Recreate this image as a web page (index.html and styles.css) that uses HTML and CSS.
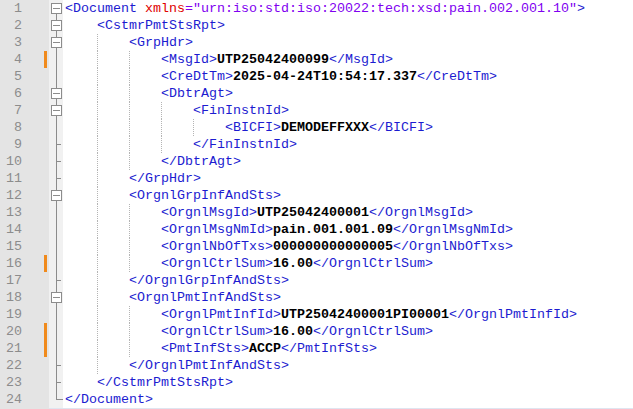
FILE: index.html
```html
<!DOCTYPE html>
<html>
<head>
<meta charset="utf-8">
<link rel="stylesheet" href="styles.css">
</head>
<body>
<div class="editor">
  <div class="ln"><span class="no">1</span><span class="mk"></span><span class="fd first"></span><span class="code"><span class="t">&lt;Document </span><span class="a">xmlns</span><span class="v">="urn:iso:std:iso:20022:tech:xsd:pain.002.001.10"</span><span class="t">&gt;</span></span></div>
  <div class="ln"><span class="no">2</span><span class="mk"></span><span class="fd open"></span><span class="code"><span class="ig"></span><span class="t">&lt;CstmrPmtStsRpt&gt;</span></span></div>
  <div class="ln"><span class="no">3</span><span class="mk"></span><span class="fd open"></span><span class="code"><span class="ig"></span><span class="ig g"></span><span class="t">&lt;GrpHdr&gt;</span></span></div>
  <div class="ln"><span class="no">4</span><span class="mk on"></span><span class="fd mid"></span><span class="code"><span class="ig"></span><span class="ig g"></span><span class="ig g"></span><span class="t">&lt;MsgId&gt;</span><b>UTP25042400099</b><span class="t">&lt;/MsgId&gt;</span></span></div>
  <div class="ln"><span class="no">5</span><span class="mk"></span><span class="fd mid"></span><span class="code"><span class="ig"></span><span class="ig g"></span><span class="ig g"></span><span class="t">&lt;CreDtTm&gt;</span><b>2025-04-24T10:54:17.337</b><span class="t">&lt;/CreDtTm&gt;</span></span></div>
  <div class="ln"><span class="no">6</span><span class="mk"></span><span class="fd open"></span><span class="code"><span class="ig"></span><span class="ig g"></span><span class="ig g"></span><span class="t">&lt;DbtrAgt&gt;</span></span></div>
  <div class="ln"><span class="no">7</span><span class="mk"></span><span class="fd open"></span><span class="code"><span class="ig"></span><span class="ig g"></span><span class="ig g"></span><span class="ig g"></span><span class="t">&lt;FinInstnId&gt;</span></span></div>
  <div class="ln"><span class="no">8</span><span class="mk"></span><span class="fd mid"></span><span class="code"><span class="ig"></span><span class="ig g"></span><span class="ig g"></span><span class="ig g"></span><span class="ig g"></span><span class="t">&lt;BICFI&gt;</span><b>DEMODEFFXXX</b><span class="t">&lt;/BICFI&gt;</span></span></div>
  <div class="ln"><span class="no">9</span><span class="mk"></span><span class="fd tail"></span><span class="code"><span class="ig"></span><span class="ig g"></span><span class="ig g"></span><span class="ig g"></span><span class="t">&lt;/FinInstnId&gt;</span></span></div>
  <div class="ln"><span class="no">10</span><span class="mk"></span><span class="fd tail"></span><span class="code"><span class="ig"></span><span class="ig g"></span><span class="ig g"></span><span class="t">&lt;/DbtrAgt&gt;</span></span></div>
  <div class="ln"><span class="no">11</span><span class="mk"></span><span class="fd tail"></span><span class="code"><span class="ig"></span><span class="ig g"></span><span class="t">&lt;/GrpHdr&gt;</span></span></div>
  <div class="ln"><span class="no">12</span><span class="mk"></span><span class="fd open"></span><span class="code"><span class="ig"></span><span class="ig g"></span><span class="t">&lt;OrgnlGrpInfAndSts&gt;</span></span></div>
  <div class="ln"><span class="no">13</span><span class="mk"></span><span class="fd mid"></span><span class="code"><span class="ig"></span><span class="ig g"></span><span class="ig g"></span><span class="t">&lt;OrgnlMsgId&gt;</span><b>UTP25042400001</b><span class="t">&lt;/OrgnlMsgId&gt;</span></span></div>
  <div class="ln"><span class="no">14</span><span class="mk"></span><span class="fd mid"></span><span class="code"><span class="ig"></span><span class="ig g"></span><span class="ig g"></span><span class="t">&lt;OrgnlMsgNmId&gt;</span><b>pain.001.001.09</b><span class="t">&lt;/OrgnlMsgNmId&gt;</span></span></div>
  <div class="ln"><span class="no">15</span><span class="mk"></span><span class="fd mid"></span><span class="code"><span class="ig"></span><span class="ig g"></span><span class="ig g"></span><span class="t">&lt;OrgnlNbOfTxs&gt;</span><b>000000000000005</b><span class="t">&lt;/OrgnlNbOfTxs&gt;</span></span></div>
  <div class="ln"><span class="no">16</span><span class="mk on"></span><span class="fd mid"></span><span class="code"><span class="ig"></span><span class="ig g"></span><span class="ig g"></span><span class="t">&lt;OrgnlCtrlSum&gt;</span><b>16.00</b><span class="t">&lt;/OrgnlCtrlSum&gt;</span></span></div>
  <div class="ln"><span class="no">17</span><span class="mk"></span><span class="fd tail"></span><span class="code"><span class="ig"></span><span class="ig g"></span><span class="t">&lt;/OrgnlGrpInfAndSts&gt;</span></span></div>
  <div class="ln"><span class="no">18</span><span class="mk"></span><span class="fd open"></span><span class="code"><span class="ig"></span><span class="ig g"></span><span class="t">&lt;OrgnlPmtInfAndSts&gt;</span></span></div>
  <div class="ln"><span class="no">19</span><span class="mk"></span><span class="fd mid"></span><span class="code"><span class="ig"></span><span class="ig g"></span><span class="ig g"></span><span class="t">&lt;OrgnlPmtInfId&gt;</span><b>UTP25042400001PI00001</b><span class="t">&lt;/OrgnlPmtInfId&gt;</span></span></div>
  <div class="ln"><span class="no">20</span><span class="mk on"></span><span class="fd mid"></span><span class="code"><span class="ig"></span><span class="ig g"></span><span class="ig g"></span><span class="t">&lt;OrgnlCtrlSum&gt;</span><b>16.00</b><span class="t">&lt;/OrgnlCtrlSum&gt;</span></span></div>
  <div class="ln"><span class="no">21</span><span class="mk on"></span><span class="fd mid"></span><span class="code"><span class="ig"></span><span class="ig g"></span><span class="ig g"></span><span class="t">&lt;PmtInfSts&gt;</span><b>ACCP</b><span class="t">&lt;/PmtInfSts&gt;</span></span></div>
  <div class="ln"><span class="no">22</span><span class="mk"></span><span class="fd tail"></span><span class="code"><span class="ig"></span><span class="ig g"></span><span class="t">&lt;/OrgnlPmtInfAndSts&gt;</span></span></div>
  <div class="ln"><span class="no">23</span><span class="mk"></span><span class="fd tail"></span><span class="code"><span class="ig"></span><span class="t">&lt;/CstmrPmtStsRpt&gt;</span></span></div>
  <div class="ln"><span class="no">24</span><span class="mk"></span><span class="fd end"></span><span class="code"><span class="t">&lt;/Document&gt;</span></span></div>
  <div class="bottom"><span class="bgut"></span><span class="bline"></span></div>
</div>
</body>
</html>
```
FILE: styles.css
```css
html, body {
  margin: 0;
  padding: 0;
  background: #ffffff;
}
.editor {
  width: 633px;
  height: 409px;
  overflow: hidden;
  font-family: "Liberation Mono", "Courier New", monospace;
  font-size: 13.33px;
}
.ln {
  display: flex;
  height: 17px;
  line-height: 17px;
}
.no {
  width: 22px;
  flex: none;
  text-align: right;
  color: #8c8c8c;
  background: #e4e4e4;
  padding-right: 22px;
}
.mk {
  width: 3px;
  flex: none;
  background: #e4e4e4;
  border-right: 2px solid #e4e4e4;
}
.mk.on {
  background: #f08a1c;
}
.fd {
  width: 14px;
  flex: none;
  position: relative;
  background: #f1f1f1;
}
.fd::before,
.fd::after {
  content: "";
  position: absolute;
}
.fd.mid::before,
.fd.tail::before,
.fd.open::before {
  left: 7px;
  top: 0;
  bottom: 0;
  width: 1px;
  background: #8c8c8c;
}
.fd.first::before {
  left: 7px;
  top: 9px;
  bottom: 0;
  width: 1px;
  background: #8c8c8c;
}
.fd.end::before {
  left: 7px;
  top: 0;
  height: 9px;
  width: 1px;
  background: #8c8c8c;
}
.fd.first::after,
.fd.open::after {
  left: 2px;
  top: 3px;
  width: 11px;
  height: 11px;
  box-sizing: border-box;
  border: 1px solid #8c8c8c;
  background: linear-gradient(#8c8c8c, #8c8c8c) center / 7px 1px no-repeat, #ffffff;
}
.fd.tail::after {
  left: 8px;
  top: 8px;
  width: 4px;
  height: 1px;
  background: #8c8c8c;
}
.fd.end::after {
  left: 7px;
  top: 8px;
  width: 7px;
  height: 1px;
  background: #8c8c8c;
}
.code {
  flex: 1;
  display: flex;
  white-space: pre;
  padding-left: 2px;
  color: #000000;
}
.ig {
  width: 32px;
  flex: none;
  box-sizing: border-box;
}
.ig.g {
  border-left: 1px dotted #b4b4b4;
}
.t {
  color: #1c1cd0;
}
.a {
  color: #e00000;
}
.v {
  color: #8000f0;
}
b {
  font-weight: bold;
  color: #000000;
}
.bottom {
  display: flex;
  height: 1px;
}
.bgut {
  width: 49px;
  flex: none;
  background: #e4e4e4;
}
.bline {
  flex: 1;
  background: #dfe5f0;
}
```
